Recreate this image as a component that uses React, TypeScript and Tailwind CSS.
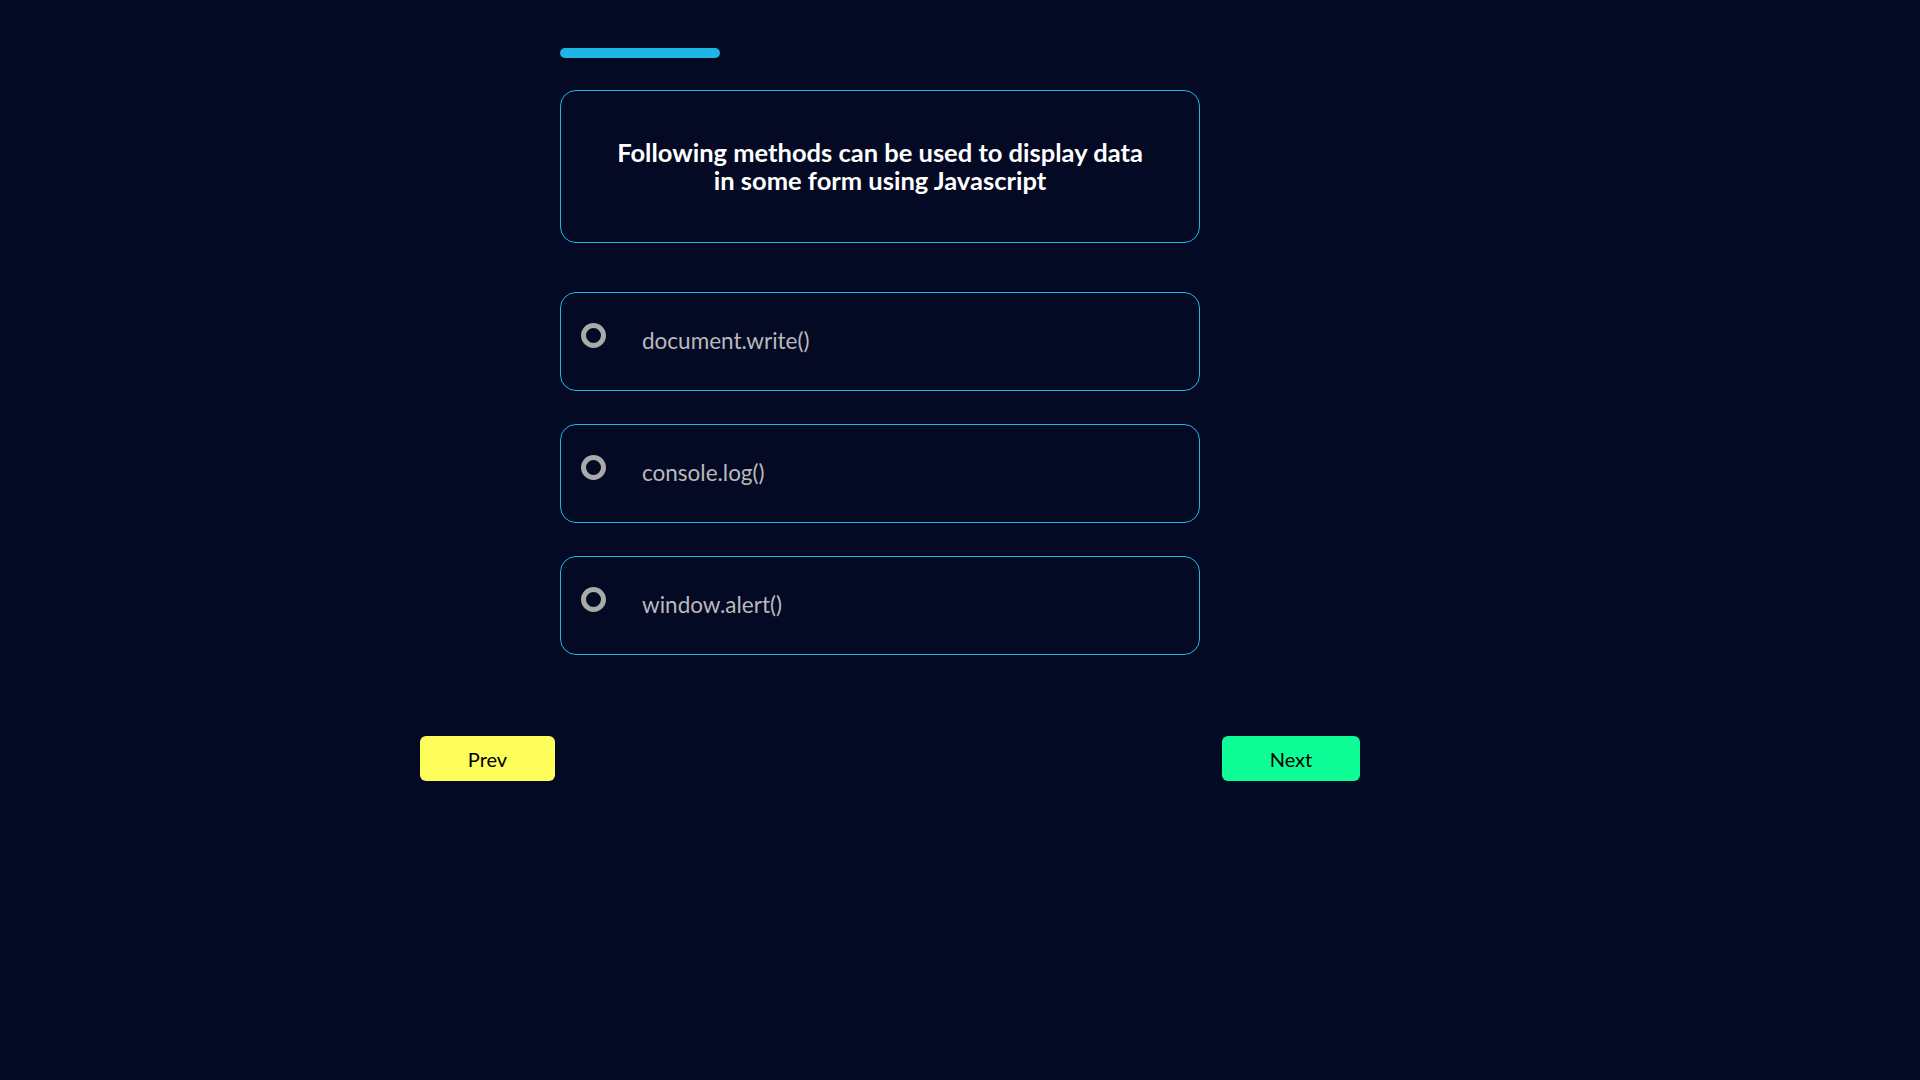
import React, { useState } from "react";

type Pergunta = {
  titulo: string[];
  opcoes: string[];
};

const perguntas: Pergunta[] = [
  {
    titulo: ["Following methods can be used to display data", "in some form using Javascript"],
    opcoes: ["document.write()", "console.log()", "window.alert()"],
  },
];

export default function App() {
  const [atual] = useState(0);
  const [escolha, setEscolha] = useState<number | null>(null);
  const pergunta = perguntas[atual];

  return (
    <div className="min-h-screen bg-[#050a24] pl-[420px] pt-[48px] font-['Lato',sans-serif]">
      <div className="w-[940px]">
        <div className="ml-[140px] w-[640px]">
          <div className="h-[10px] w-[160px] rounded-full bg-[#1fb5e6]" />

          <div className="mt-[32px] h-[153px] pb-[2px] rounded-2xl border border-[#1fb5e6] flex items-center justify-center">
            <h1 className="text-white font-bold text-[25.5px] leading-[28px] text-center">
              {pergunta.titulo[0]}
              <br />
              {pergunta.titulo[1]}
            </h1>
          </div>

          <div className="mt-[49px] flex flex-col gap-[33px]">
            {pergunta.opcoes.map((opcao, i) => (
              <button
                key={i}
                onClick={() => setEscolha(i)}
                className="h-[99px] w-full rounded-2xl border border-[#1fb5e6] px-[20px] pt-[30px] flex items-start text-left"
              >
                <span
                  className={`w-[25px] h-[25px] shrink-0 rounded-full border-[5px] ${
                    escolha === i ? "border-[#1fb5e6]" : "border-[#aaaaaa]"
                  }`}
                />
                <span className="ml-[36px] mt-[6px] text-[22.5px] leading-[24px] text-[#b9b9bd]">
                  {opcao}
                </span>
              </button>
            ))}
          </div>
        </div>

        <div className="mt-[81px] flex justify-between">
          <button className="w-[135px] h-[45px] rounded-md bg-[#fdfd5c] text-black text-[20px]">
            Prev
          </button>
          <button className="w-[138px] h-[45px] rounded-md bg-[#0efd97] text-black text-[20px]">
            Next
          </button>
        </div>
      </div>
    </div>
  );
}
